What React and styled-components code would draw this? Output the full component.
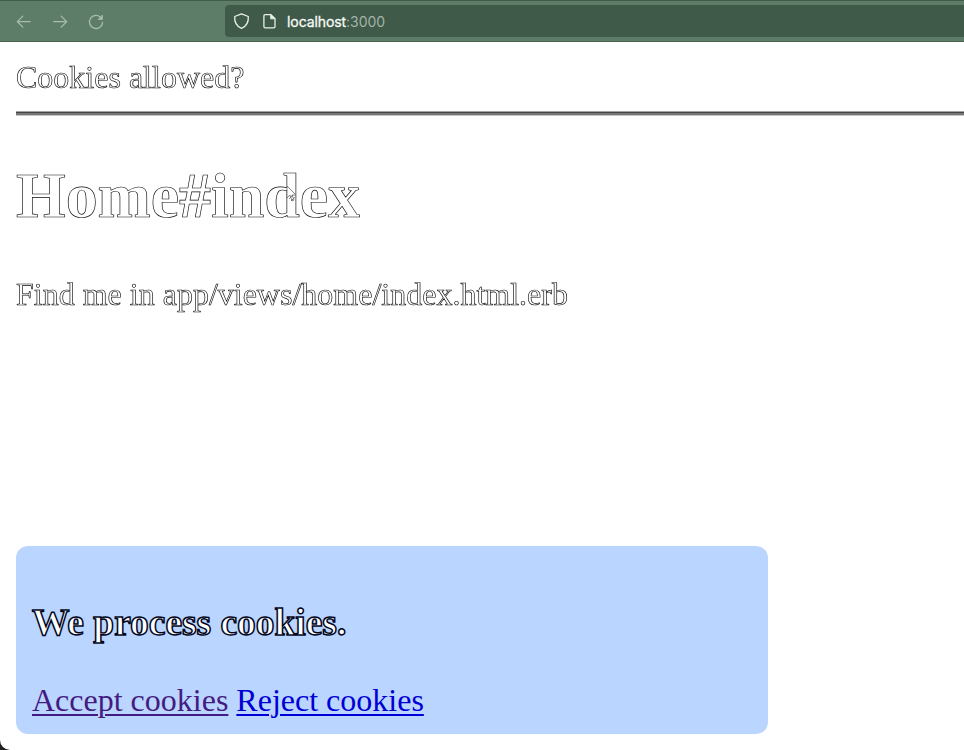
import React from "react";
import styled, { createGlobalStyle } from "styled-components";

const GlobalStyle = createGlobalStyle`
  * { box-sizing: border-box; }
  body { margin: 0; background: #202020; overflow: hidden; }
`;

const Window = styled.div`
  position: relative;
  height: 750px;
  display: flex;
  flex-direction: column;
  background: #fff;
  border-bottom-left-radius: 10px;
  overflow: hidden;
  font-family: "Liberation Serif", "Times New Roman", serif;
`;

const Toolbar = styled.header`
  flex: none;
  height: 42px;
  display: flex;
  align-items: center;
  padding: 0 0 0 15px;
  background: #5e7d69;
  border-top: 1px solid #425c4b;
  border-bottom: 1px solid #466551;
`;

const NavButtons = styled.nav`
  width: 210px;
  display: flex;
  gap: 18px;
`;

const Icon = styled.svg`
  display: block;
  flex: none;
  width: 18px;
  height: 18px;
  fill: none;
  stroke: ${(p) => (p.$bright ? "#e6f0e9" : "#a9bcb0")};
  stroke-width: 1.3;
  stroke-linecap: round;
  stroke-linejoin: round;
`;

const AddressBar = styled.div`
  flex: 1;
  height: 32px;
  display: flex;
  align-items: center;
  gap: 9.5px;
  padding-left: 8px;
  background: #3f5a48;
  border-radius: 4px 0 0 4px;
`;

const Address = styled.span`
  padding-top: 1px;
  margin-left: -1px;
  font: 14px/18px Inter, sans-serif;
  letter-spacing: -0.08px;
  color: #a2b3a8;
`;

const Host = styled.span`
  color: #f7fbf8;
  -webkit-text-stroke: 0.3px #f7fbf8;
`;

const Page = styled.main`
  flex: 1;
  display: flex;
  flex-direction: column;
  padding: 17px 0 16px 16px;
`;

const Outlined = styled.p`
  margin: 0;
  font-size: 32px;
  line-height: 37px;
  color: #fff;
  -webkit-text-stroke: 0.65px #080808;
  will-change: transform;
`;

const Rule = styled.hr`
  flex: none;
  width: 100%;
  height: 5px;
  margin: 15px 0 0;
  border: 0;
  background: linear-gradient(#a5a5a5 1px, #444 1px 2px, #777 2px 4px, #c6c6c6 4px);
`;

const Title = styled(Outlined).attrs({ as: "h1" })`
  align-self: flex-start;
  position: relative;
  margin-top: 43px;
  font-size: 64px;
  line-height: 74px;
  font-weight: 700;
  letter-spacing: -0.1px;
`;

const Pointer = styled.svg`
  position: absolute;
  left: 269px;
  top: 26px;
  width: 12px;
  height: 20px;
  fill: #fff;
  stroke: #666;
  stroke-width: 0.8;
`;

const Path = styled(Outlined)`
  margin-top: 43px;
`;

const CookieBanner = styled.section`
  width: 752px;
  height: 188px;
  margin-top: auto;
  padding: 55px 16px 0;
  background: #bad5ff;
  border-radius: 12px;
`;

const BannerTitle = styled.h3`
  margin: 0 0 38px;
  font-size: 37.44px;
  line-height: 43px;
  color: #fff;
  -webkit-text-stroke: 1.5px #02061c;
  font-weight: 700;
`;

const Actions = styled.div`
  display: flex;
  gap: 8px;
`;

const ActionLink = styled.a`
  font-size: 32px;
  line-height: 37px;
  color: ${(p) => (p.$visited ? "#441b80" : "#0000d4")};
  text-decoration: underline;
  text-decoration-thickness: 1.5px;
  text-underline-offset: 3px;
`;

export default function App() {
  return (
    <>
      <GlobalStyle />
      <Window>
        <Toolbar>
          <NavButtons>
            <Icon viewBox="0 0 18 18"><path d="M15.2 9.6H2.6M7.8 4.1L2.3 9.6l5.5 5.5" /></Icon>
            <Icon viewBox="0 0 18 18"><path d="M2.8 9.6h12.6M10.2 4.1L15.7 9.6l-5.5 5.5" /></Icon>
            <Icon viewBox="0 0 18 18">
              <path d="M14.2 5.8A6.6 6.6 0 1 0 15.6 10.4" />
              <path d="M15.4 3.4v4h-4z" fill="#a9bcb0" strokeWidth="0.8" />
            </Icon>
          </NavButtons>
          <AddressBar>
            <Icon $bright viewBox="0 0 18 18">
              <path d="M8.5 1.8L15.3 4.5C15.7 10 13.2 14.4 8.5 16.4C3.8 14.4 1.3 10 1.7 4.5z" />
            </Icon>
            <Icon $bright viewBox="0 0 18 18">
              <path d="M4.2 2.6h5.6l4.2 4.2v7.8a1.3 1.3 0 0 1-1.3 1.3H4.2a1.3 1.3 0 0 1-1.3-1.3V3.9a1.3 1.3 0 0 1 1.3-1.3z" />
              <path d="M9.7 2.8v4h4.1z" fill="#e6f0e9" strokeWidth="0.9" />
            </Icon>
            <Address><Host>localhost</Host>:3000</Address>
          </AddressBar>
        </Toolbar>
        <Page>
          <Outlined>Cookies allowed?</Outlined>
          <Rule />
          <Title>
            Home#index
            <Pointer viewBox="0 0 12 20">
              <path d="M2 1v12l3-3 2 6 2-1-2-5h4z" />
              <path d="M4 14l4-4M6 16l4-4" />
            </Pointer>
          </Title>
          <Path>Find me in app/views/home/index.html.erb</Path>
          <CookieBanner>
            <BannerTitle>We process cookies.</BannerTitle>
            <Actions>
              <ActionLink href="#accept" $visited>Accept cookies</ActionLink>
              <ActionLink href="#reject">Reject cookies</ActionLink>
            </Actions>
          </CookieBanner>
        </Page>
      </Window>
    </>
  );
}
